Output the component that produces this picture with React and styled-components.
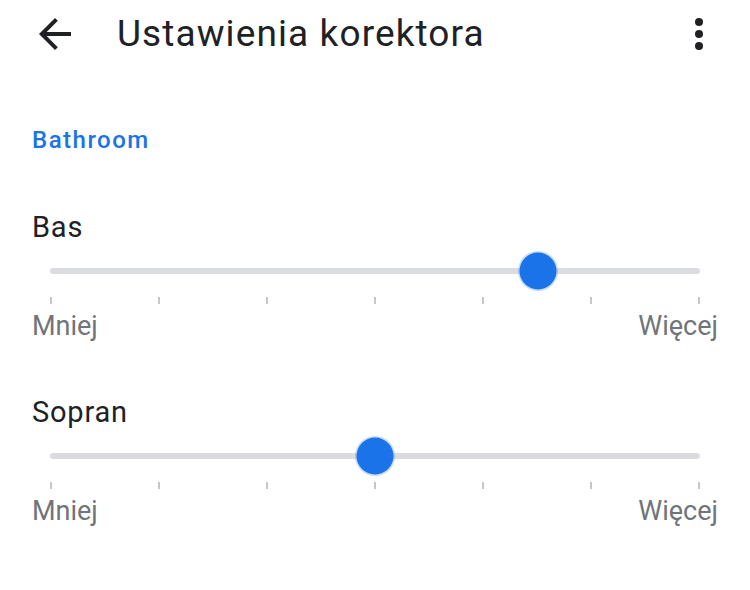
import React from 'react';
import styled, { createGlobalStyle } from 'styled-components';

const GlobalStyle = createGlobalStyle`
  html, body {
    margin: 0;
    padding: 0;
    background: #ffffff;
  }
  body {
    font-family: Roboto, "Noto Sans", "Liberation Sans", sans-serif;
    color: #202124;
  }
`;

const Page = styled.div`
  width: 750px;
  min-height: 590px;
  background: #fff;
`;

const Toolbar = styled.header`
  height: 68px;
  display: flex;
  align-items: center;
  padding: 0 27px 0 31px;
`;

const IconButton = styled.button`
  width: 48px;
  height: 48px;
  padding: 0;
  border: 0;
  background: transparent;
  display: flex;
  align-items: center;
  justify-content: center;
  color: #202124;
  cursor: pointer;
`;

const Title = styled.h1`
  flex: 1;
  margin: 0 0 0 38px;
  font-size: 37px;
  font-weight: 400;
  letter-spacing: 1.1px;
  line-height: 44px;
  color: #202124;
`;

const Content = styled.main`
  padding: 58px 32px 0 32px;
`;

const SectionTitle = styled.h2`
  margin: 0 0 55px 0;
  font-size: 24px;
  line-height: 28px;
  font-weight: 500;
  letter-spacing: 1.5px;
  color: #1a73e8;
`;

const SliderBlock = styled.div`
  & + & {
    margin-top: 52px;
  }
`;

const SliderLabel = styled.div`
  font-size: 29px;
  line-height: 36px;
  letter-spacing: 0.8px;
  color: #202124;
`;

const TrackArea = styled.div`
  position: relative;
  height: 36px;
  margin: 8px 18px 0 18px;
  display: flex;
  align-items: center;
`;

const Track = styled.div`
  flex: 1;
  height: 6px;
  border-radius: 3px;
  background: #dadce0;
`;

const Thumb = styled.div`
  position: absolute;
  top: 50%;
  left: ${p => p.$value * 100}%;
  width: 37px;
  height: 37px;
  border-radius: 50%;
  background: #1a73e8;
  box-shadow: 0 0 0 1.5px rgba(26, 115, 232, 0.25);
  transform: translate(-50%, -50%);
`;

const Ticks = styled.div`
  display: flex;
  justify-content: space-between;
  margin: 8px 18px 0 18px;
`;

const Tick = styled.span`
  width: 2px;
  height: 7px;
  background: #c4c7cb;
`;

const ScaleLabels = styled.div`
  display: flex;
  justify-content: space-between;
  margin-top: 6px;
  font-size: 27px;
  line-height: 32px;
  color: #70757a;
`;

const ArrowBack = () => (
  <svg width="48" height="48" viewBox="0 0 24 24" fill="currentColor">
    <path d="M20 11H7.83l5.59-5.59L12 4l-8 8 8 8 1.41-1.41L7.83 13H20v-2z" />
  </svg>
);

const MoreVert = () => (
  <svg width="48" height="48" viewBox="0 0 24 24" fill="currentColor">
    <circle cx="12" cy="6" r="2" />
    <circle cx="12" cy="12" r="2" />
    <circle cx="12" cy="18" r="2" />
  </svg>
);

const EqSlider = ({ label, value }) => (
  <SliderBlock>
    <SliderLabel>{label}</SliderLabel>
    <TrackArea>
      <Track />
      <Thumb $value={value} />
    </TrackArea>
    <Ticks>
      {Array.from({ length: 7 }).map((_, i) => (
        <Tick key={i} />
      ))}
    </Ticks>
    <ScaleLabels>
      <span>Mniej</span>
      <span>Więcej</span>
    </ScaleLabels>
  </SliderBlock>
);

export default function App() {
  return (
    <Page>
      <GlobalStyle />
      <Toolbar>
        <IconButton aria-label="Wstecz">
          <ArrowBack />
        </IconButton>
        <Title>Ustawienia korektora</Title>
        <IconButton aria-label="Więcej opcji">
          <MoreVert />
        </IconButton>
      </Toolbar>
      <Content>
        <SectionTitle>Bathroom</SectionTitle>
        <EqSlider label="Bas" value={0.75} />
        <EqSlider label="Sopran" value={0.5} />
      </Content>
    </Page>
  );
}
